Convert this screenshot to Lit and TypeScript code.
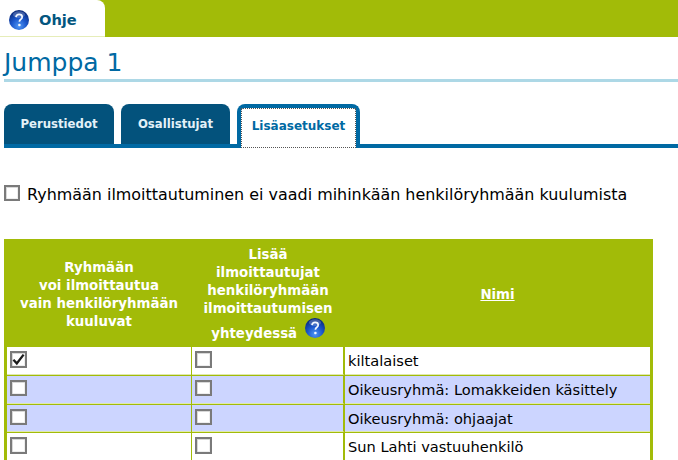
import { LitElement, html, css, svg } from "lit";
import { customElement } from "lit/decorators.js";

let uid = 0;
const helpIcon = () => {
  const id = `g${uid++}`;
  return html`<svg class="help" viewBox="0 0 20 20" width="20" height="20">
    <defs>
      <radialGradient id=${id} cx="0.5" cy="0.8" r="0.75">
        <stop offset="0" stop-color="#4f97f5"></stop>
        <stop offset="0.5" stop-color="#1b57cc"></stop>
        <stop offset="1" stop-color="#0a2a7c"></stop>
      </radialGradient>
    </defs>
    <circle cx="10" cy="10" r="10" fill=${`url(#${id})`}></circle>
    <ellipse cx="10" cy="4.6" rx="6" ry="3.4" fill="#fff" opacity=".22"></ellipse>
    ${svg`<path d="M7 7.2c.2-1.8 1.4-2.8 3.1-2.8 1.9 0 3.1 1 3.1 2.6 0 1.2-.7 1.9-1.6 2.5-.8.6-1.2 1.1-1.2 2.2" fill="none" stroke="#f4f8ff" stroke-width="1.7"></path>
    <circle cx="10.4" cy="15" r="1.3" fill="#f4f8ff"></circle>`}
  </svg>`;
};

const box = (checked = false) => html`<span class="box">${checked
  ? html`<svg viewBox="0 0 13 13" width="13" height="13"><path d="M1.4 6.8 4.8 10.4 11.6 1.6" fill="none" stroke="#1b1b1b" stroke-width="2.3"></path></svg>`
  : ""}</span>`;

const rows = [
  { name: "kiltalaiset", on: true, alt: false },
  { name: "Oikeusryhmä: Lomakkeiden käsittely", on: false, alt: true },
  { name: "Oikeusryhmä: ohjaajat", on: false, alt: true },
  { name: "Sun Lahti vastuuhenkilö", on: false, alt: false },
];

@customElement("app-root")
export class AppRoot extends LitElement {
  static styles = css`
    :host { display: block; width: 678px; height: 460px; overflow: hidden; background: #fff; font-family: "DejaVu Sans", sans-serif; color: #000; }
    * { box-sizing: border-box; }
    .top { height: 37px; background: #a2bb08; display: flex; }
    .ohje { width: 105px; height: 37px; background: #fff; border-bottom: 1px solid #e6edb9; border-top-right-radius: 8px; display: flex; align-items: center; gap: 10px; padding: 3px 0 0 9px; color: #03567f; font-weight: bold; font-size: 14.6px; }
    .help { flex: none; display: inline-block; vertical-align: baseline; }
    h1 { margin: 12px 0 0 4px; height: 33px; border-bottom: 3px solid #add8e6; font-weight: normal; font-size: 25px; line-height: 28px; color: #0069a3; }
    .tabs { margin: 22px 0 0 4px; height: 44px; display: flex; gap: 7px; border-bottom: 4px solid #0069a3; align-items: flex-start; }
    .tab { height: 40px; border-radius: 8px 8px 0 0; background: #03527c; color: #e3f1f8; font-size: 11.7px; font-weight: bold; display: flex; align-items: center; justify-content: center; padding-bottom: 1px; }
    .t1 { width: 110px; }
    .t2 { width: 109px; }
    .t3 { width: 123px; height: 44px; background: #fff; border: 4px solid #0069a3; border-bottom: 0; color: #0069a3; font-size: 12px; padding: 0 0 4px; position: relative; }
    .t3::after { content: ""; position: absolute; inset: 0; border: 1px dotted #555; }
    .only { margin: 37px 0 0 4px; display: flex; align-items: flex-start; gap: 7px; height: 20px; font-size: 15.95px; line-height: 20px; }
    .only .box { width: 16px; height: 16px; }
    .table { margin: 34px 0 0 4px; width: 649px; background: #a2bb08; padding: 0 3px; display: grid; grid-template-columns: 184px 152px 305px; column-gap: 1px; row-gap: 1px; }
    .th { height: 107px; padding-top: 4px; display: flex; align-items: center; justify-content: center; text-align: center; color: #fff; font-size: 13.35px; font-weight: bold; line-height: 18px; }
    .th a { color: #fff; text-decoration: underline; }
    .th .help { margin-left: 3px; }
    .td { height: 27.8px; background: #fff; border-bottom: 1px solid #e0e9ae; padding: 4px 3px 0; font-size: 14.6px; line-height: 22px; white-space: nowrap; }
    .td.mid { border-right: 1px solid #a2bb08; }
    .td.alt { background: #ccd5ff; }
    .td.name { padding: 3px 3px 0; }
    .box { width: 17px; height: 16.5px; border: 2px solid #7a7a7a; background: #fff; box-shadow: inset 1px 1px 0 #d8d8d8, inset -1px -1px 0 #eee; display: flex; align-items: center; justify-content: center; }
  `;

  render() {
    return html`
      <div class="top"><div class="ohje">${helpIcon()}<span>Ohje</span></div></div>
      <h1>Jumppa 1</h1>
      <div class="tabs">
        <div class="tab t1">Perustiedot</div>
        <div class="tab t2">Osallistujat</div>
        <div class="tab t3">Lisäasetukset</div>
      </div>
      <div class="only">${box()}<span>Ryhmään ilmoittautuminen ei vaadi mihinkään henkilöryhmään kuulumista</span></div>
      <div class="table">
        <div class="th"><span>Ryhmään<br />voi ilmoittautua<br />vain henkilöryhmään<br />kuuluvat</span></div>
        <div class="th"><span>Lisää<br />ilmoittautujat<br />henkilöryhmään<br />ilmoittautumisen<br />yhteydessä ${helpIcon()}</span></div>
        <div class="th"><a>Nimi</a></div>
        ${rows.map(
          (r) => html`
            <div class="td ${r.alt ? "alt" : ""}">${box(r.on)}</div>
            <div class="td mid ${r.alt ? "alt" : ""}">${box()}</div>
            <div class="td name ${r.alt ? "alt" : ""}">${r.name}</div>
          `
        )}
      </div>
    `;
  }
}
